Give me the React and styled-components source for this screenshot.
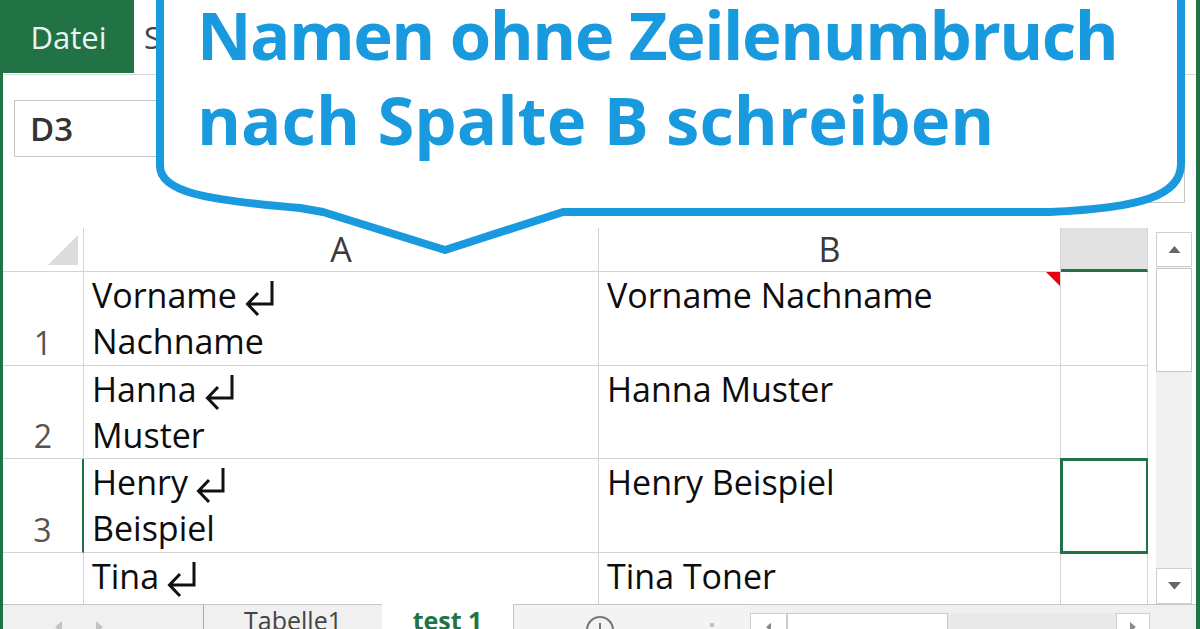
import React from "react";
import styled, { createGlobalStyle, css } from "styled-components";

const GREEN = "#217346";
const GRID = "#d4d4d4";
const BLUE = "#1a9ade";

const GlobalStyle = createGlobalStyle`
  html, body { margin: 0; padding: 0; background: #fff; }
  body { font-family: "Open Sans", "DejaVu Sans", sans-serif; }
`;

const Window = styled.div`
  position: relative;
  width: 1200px;
  height: 629px;
  overflow: hidden;
  box-sizing: border-box;
  border-left: 3px solid ${GREEN};
  border-right: 4px solid ${GREEN};
  display: flex;
  flex-direction: column;
  background: #fff;
`;

const Ribbon = styled.div`
  flex: none;
  height: 75px;
  box-sizing: border-box;
  border-bottom: 1px solid #d6d6d6;
  display: flex;
  align-items: flex-start;
`;

const FileTab = styled.div`
  width: 131px;
  height: 73px;
  background: ${GREEN};
  color: #eaf4ee;
  font: 400 31px "Open Sans", sans-serif;
  display: flex;
  align-items: center;
  justify-content: center;
`;

const RibbonTab = styled.div`
  height: 73px;
  margin-left: 10px;
  color: #444;
  font: 400 31px "Open Sans", sans-serif;
  display: flex;
  align-items: center;
`;

const FormulaArea = styled.div`
  flex: none;
  height: 153px;
  box-sizing: border-box;
  padding: 25px 11px 0 11px;
  display: flex;
  align-items: flex-start;
`;

const NameBox = styled.div`
  width: 250px;
  height: 57px;
  box-sizing: border-box;
  border: 1px solid #c6c6c6;
  padding-left: 15px;
  display: flex;
  align-items: center;
  font: 600 33px "Open Sans", sans-serif;
  color: #333;
`;

const FormulaInput = styled.div`
  margin-left: auto;
  width: 700px;
  height: 103px;
  box-sizing: border-box;
  border: 1px solid #c6c6c6;
`;

const Main = styled.div`
  flex: none;
  height: 376px;
  display: flex;
`;

const Sheet = styled.div`
  width: 1145px;
  height: 376px;
  overflow: hidden;
  display: grid;
  grid-template-columns: 81px 515px 462px 87px;
  grid-template-rows: 44px 94px 93px 94px 94px;
`;

const Corner = styled.div`
  box-sizing: border-box;
  border-right: 1px solid ${GRID};
  border-bottom: 1px solid ${GRID};
  display: flex;
  align-items: flex-end;
  justify-content: flex-end;
  padding: 0 5px 6px 0;
`;

const CornerMark = styled.div`
  width: 30px;
  height: 30px;
  background: #dcdcdc;
  clip-path: polygon(100% 0, 100% 100%, 0 100%);
`;

const ColHead = styled.div`
  box-sizing: border-box;
  border-right: 1px solid ${GRID};
  border-bottom: 1px solid ${GRID};
  font: 500 34px/43px "Open Sans", sans-serif;
  color: #3a3a3a;
  text-align: center;
  ${(p) =>
    p.$active &&
    css`
      background: #e1e1e1;
      border-bottom: 3px solid ${GREEN};
    `}
`;

const RowHead = styled.div`
  box-sizing: border-box;
  border-right: ${(p) => (p.$active ? `2px solid ${GREEN}` : `1px solid ${GRID}`)};
  border-bottom: 1px solid ${GRID};
  display: flex;
  align-items: flex-end;
  justify-content: center;
  font: 400 32px/1.36 "Open Sans", sans-serif;
  color: #555;
`;

const Cell = styled.div`
  position: relative;
  box-sizing: border-box;
  border-right: 1px solid ${GRID};
  border-bottom: 1px solid ${GRID};
  padding-left: 8px;
  font: 500 34px/46px "Open Sans", sans-serif;
  color: #0d0d0d;
  white-space: nowrap;
  ${(p) =>
    p.$selected &&
    css`
      z-index: 1;
      outline: 3px solid ${GREEN};
      outline-offset: -2px;
    `}
`;

const NoteMark = styled.span`
  position: absolute;
  top: 0;
  right: 0;
  width: 14px;
  height: 14px;
  background: #e3000f;
  clip-path: polygon(0 0, 100% 0, 100% 100%);
`;

const ReturnSvg = styled.svg`
  vertical-align: -9px;
  margin-left: 7px;
`;

const ReturnMark = () => (
  <ReturnSvg viewBox="0 0 32 37" width="32" height="37">
    <path
      d="M28 1 V24 H4 M14 13 L3.5 24 L14 35"
      fill="none"
      stroke="#111"
      strokeWidth="3"
    />
  </ReturnSvg>
);

const VScroll = styled.div`
  flex: 1;
  box-sizing: border-box;
  padding: 4px 4px 0 8px;
  display: flex;
  flex-direction: column;
`;

const ScrollButton = styled.div`
  flex: none;
  height: ${(p) => p.$h}px;
  box-sizing: border-box;
  border: 1px solid #cfcfcf;
  background: #fff;
  display: flex;
  align-items: center;
  justify-content: center;
`;

const Track = styled.div`
  flex: 1;
  background: #f0f0f0;
  padding-top: 1px;
`;

const Thumb = styled.div`
  height: 104px;
  box-sizing: border-box;
  border: 1px solid #c8c8c8;
  background: #fff;
`;

const TabBar = styled.div`
  flex: none;
  height: 40px;
  box-sizing: border-box;
  border-top: 1px solid #c6c6c6;
  background: #f0f0f0;
  display: flex;
`;

const TabNav = styled.div`
  width: 200px;
  display: flex;
  gap: 34px;
  padding: 16px 0 0 52px;
  box-sizing: border-box;
`;

const SheetTab = styled.div`
  width: ${(p) => p.$w}px;
  box-sizing: border-box;
  border-left: 1px solid #a8a8a8;
  text-align: center;
  font: ${(p) => (p.$active ? 700 : 400)} 25px/30px "Open Sans", sans-serif;
  color: ${(p) => (p.$active ? GREEN : "#444")};
  ${(p) =>
    p.$active &&
    css`
      background: #fff;
      margin-top: -1px;
      border-left: none;
      padding-top: 1px;
    `}
`;

const TabTools = styled.div`
  width: 237px;
  box-sizing: border-box;
  border-left: 1px solid #c6c6c6;
  background: #f3f3f3;
  display: flex;
  padding: 10px 0 0 71px;
  gap: 95px;
`;

const Dot = styled.span`
  width: 4px;
  height: 4px;
  margin-top: 8px;
  background: #c4c4c4;
`;

const HScroll = styled.div`
  width: 400px;
  margin-top: 8px;
  display: flex;
  background: #e9e9e9;
`;

const HButton = styled.div`
  width: ${(p) => p.$w}px;
  height: 30px;
  box-sizing: border-box;
  border: 1px solid #cfcfcf;
  background: #fff;
  display: flex;
  justify-content: center;
  padding-top: 8px;
`;

const HThumb = styled.div`
  width: 161px;
  height: 30px;
  box-sizing: border-box;
  border: 1px solid #c8c8c8;
  background: #fff;
`;

const HTrack = styled.div`
  flex: 1;
`;

const CalloutLayer = styled.div`
  position: absolute;
  left: -3px;
  top: 0;
  width: 1200px;
  height: 260px;
  pointer-events: none;
  box-sizing: border-box;
  padding-left: 197px;
`;

const CalloutShape = styled.svg`
  position: absolute;
  left: 0;
  top: 0;
`;

const CalloutText = styled.div`
  position: relative;
  margin-top: -8px;
  font: 700 67px/85px "Open Sans", sans-serif;
  color: ${BLUE};
  white-space: nowrap;
`;

const CalloutLine = styled.div`
  letter-spacing: ${(p) => p.$spacing || 0}px;
`;

const Triangle = ({ dir, size = 12, color = "#666" }) => {
  const pts = {
    up: "0,7 6,0 12,7",
    down: "0,0 12,0 6,7",
    left: "7,0 7,12 0,6",
    right: "0,0 0,12 7,6",
  }[dir];
  const vertical = dir === "up" || dir === "down";
  const vb = vertical ? "0 0 12 7" : "0 0 7 12";
  const w = vertical ? size : (size * 7) / 12;
  const h = vertical ? (size * 7) / 12 : size;
  return (
    <svg viewBox={vb} width={w} height={h}>
      <polygon points={pts} fill={color} />
    </svg>
  );
};

const rows = [
  { n: "1", a: ["Vorname", "Nachname"], b: "Vorname Nachname", note: true },
  { n: "2", a: ["Hanna", "Muster"], b: "Hanna Muster" },
  { n: "3", a: ["Henry", "Beispiel"], b: "Henry Beispiel", active: true },
  { n: "4", a: ["Tina", "Toner"], b: "Tina Toner" },
];

export default function App() {
  return (
    <>
      <GlobalStyle />
      <Window>
        <Ribbon>
          <FileTab>Datei</FileTab>
          <RibbonTab>Start</RibbonTab>
        </Ribbon>

        <FormulaArea>
          <NameBox>D3</NameBox>
          <FormulaInput />
        </FormulaArea>

        <Main>
          <Sheet>
            <Corner>
              <CornerMark />
            </Corner>
            <ColHead>A</ColHead>
            <ColHead>B</ColHead>
            <ColHead $active />

            {rows.map((r) => (
              <React.Fragment key={r.n}>
                <RowHead $active={r.active}>{r.n}</RowHead>
                <Cell>
                  <div>
                    {r.a[0]}
                    <ReturnMark />
                  </div>
                  <div>{r.a[1]}</div>
                </Cell>
                <Cell>
                  {r.b}
                  {r.note && <NoteMark />}
                </Cell>
                <Cell $selected={r.active} />
              </React.Fragment>
            ))}
          </Sheet>

          <VScroll>
            <ScrollButton $h={35}>
              <Triangle dir="up" size={13} />
            </ScrollButton>
            <Track>
              <Thumb />
            </Track>
            <ScrollButton $h={36}>
              <Triangle dir="down" size={13} />
            </ScrollButton>
          </VScroll>
        </Main>

        <TabBar>
          <TabNav>
            <Triangle dir="left" size={12} color="#c4c4c4" />
            <Triangle dir="right" size={12} color="#c4c4c4" />
          </TabNav>
          <SheetTab $w={179}>Tabelle1</SheetTab>
          <SheetTab $w={131} $active>
            test 1
          </SheetTab>
          <TabTools>
            <svg width="30" height="30" viewBox="0 0 30 30">
              <circle cx="15" cy="15" r="13" fill="none" stroke="#777" strokeWidth="2" />
              <path d="M15 8 V22 M8 15 H22" stroke="#777" strokeWidth="2" />
            </svg>
            <Dot />
          </TabTools>
          <HScroll>
            <HButton $w={37}>
              <Triangle dir="left" size={10} color="#888" />
            </HButton>
            <HThumb />
            <HTrack />
            <HButton $w={34}>
              <Triangle dir="right" size={10} color="#888" />
            </HButton>
          </HScroll>
        </TabBar>

        <CalloutLayer>
          <CalloutShape width="1200" height="260" viewBox="0 0 1200 260">
            <path
              d="M160 -10 V166 C160 192 205 200 300 208 L323 212 L445 250 L563 212 L1050 212 C1140 208 1181 196 1181 164 V -10 Z"
              fill="#fff"
              stroke={BLUE}
              strokeWidth="8"
              strokeLinejoin="round"
            />
          </CalloutShape>
          <CalloutText>
            <CalloutLine $spacing={-1.5}>Namen ohne Zeilenumbruch</CalloutLine>
            <CalloutLine>nach Spalte B schreiben</CalloutLine>
          </CalloutText>
        </CalloutLayer>
      </Window>
    </>
  );
}
